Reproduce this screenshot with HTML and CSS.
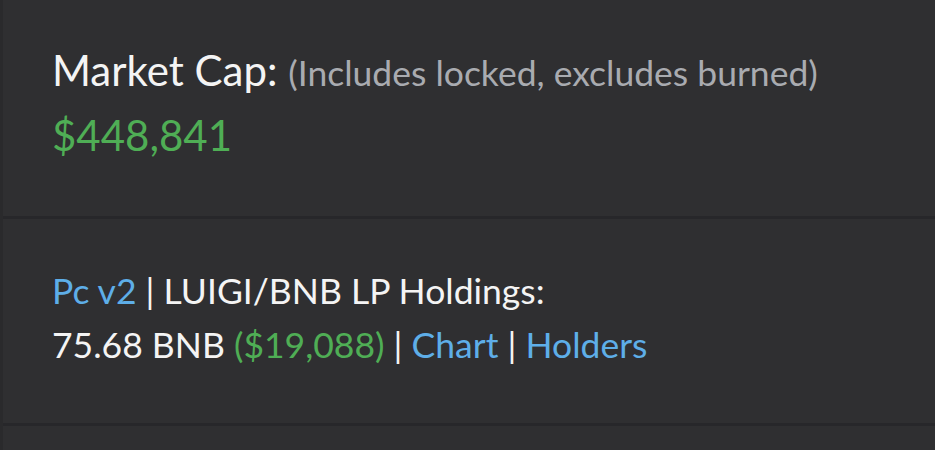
FILE: index.html
```html
<!DOCTYPE html>
<html>
<head>
<meta charset="utf-8">
<link rel="stylesheet" href="styles.css">
</head>
<body>
<div class="panel">
  <section class="block block-cap">
    <div class="line"><span class="label">Market Cap:</span> <span class="note">(Includes locked, excludes burned)</span></div>
    <div class="line green">$448,841</div>
  </section>
  <section class="block block-lp">
    <div class="line"><a class="link">Pc v2</a> | LUIGI/BNB LP Holdings:</div>
    <div class="line">75.68 BNB <span class="green">($19,088)</span> | <a class="link">Chart</a> | <a class="link">Holders</a></div>
  </section>
  <section class="block block-next"></section>
</div>
</body>
</html>
```
FILE: styles.css
```css
html, body {
  margin: 0;
  padding: 0;
  background: #2f2f31;
  height: 100%;
}
body {
  font-family: Lato, "Open Sans", sans-serif;
  color: #f4f4f4;
  overflow: hidden;
}
.panel {
  border-left: 3px solid #2a2a2c;
  min-height: 100%;
}
.block {
  padding-left: 49px;
  border-bottom: 3px solid #27272a;
}
.block-cap {
  padding-top: 39px;
  padding-bottom: 49px;
  font-size: 42px;
  line-height: 63px;
}
.block-cap .note {
  font-size: 35.5px;
  color: #a9abb0;
}
.block-lp {
  padding-top: 45px;
  padding-bottom: 51px;
  font-size: 35.5px;
  line-height: 54px;
}
.block-next {
  border-bottom: none;
}
.line {
  white-space: nowrap;
}
.green {
  color: #4fae55;
}
.link {
  color: #5eaee8;
  text-decoration: none;
}
```
